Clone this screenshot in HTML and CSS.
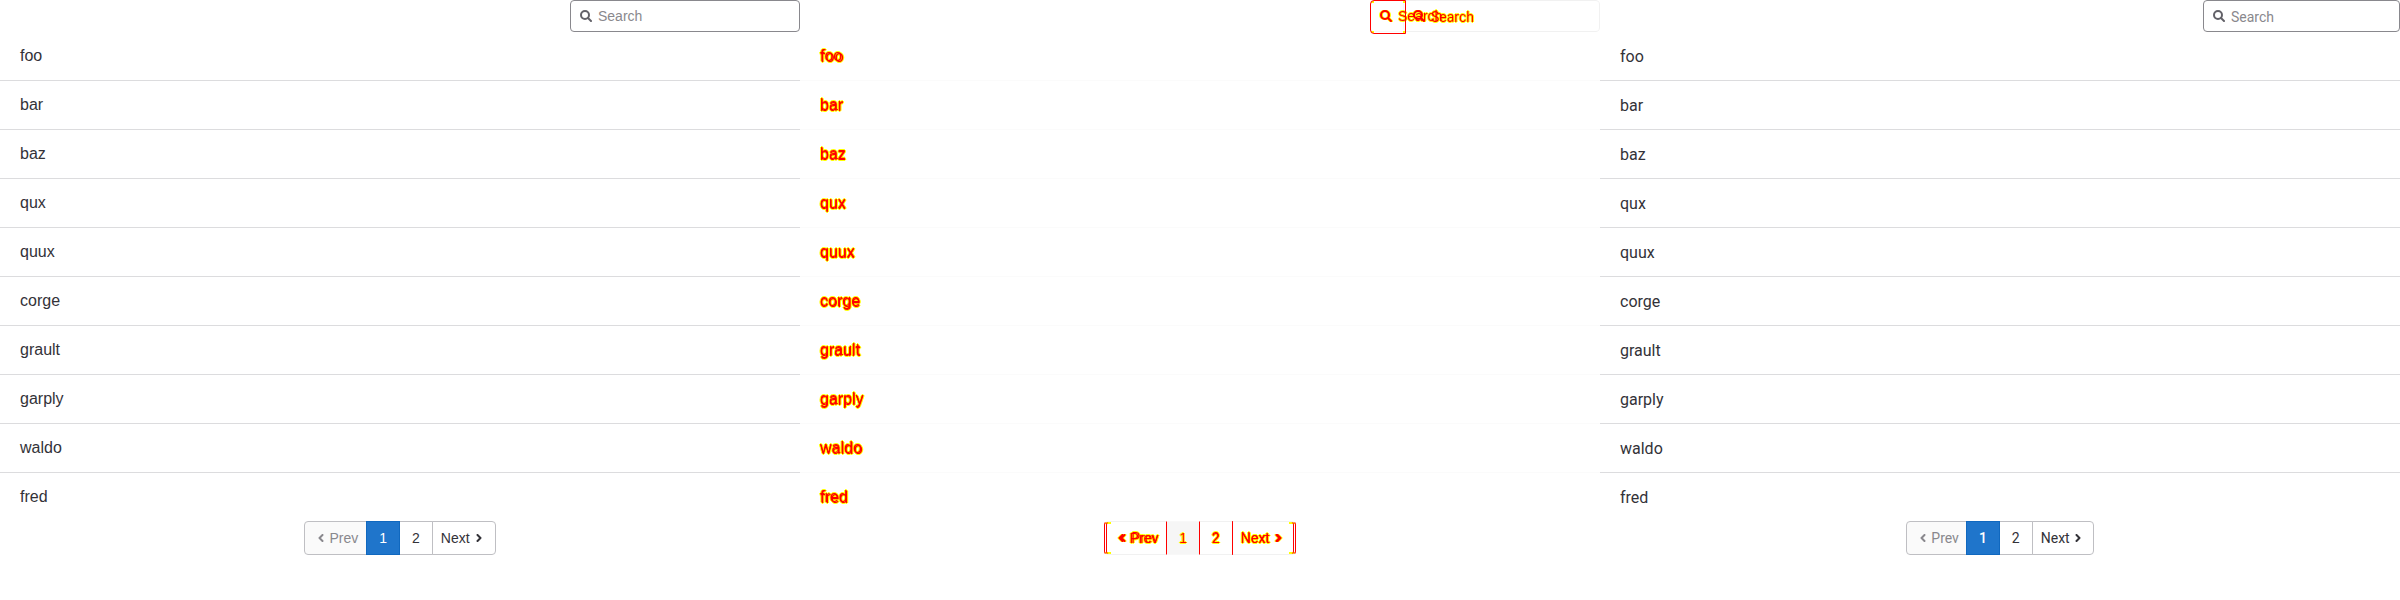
FILE: index.html
```
<!DOCTYPE html>
<html lang="en">
<head>
<meta charset="utf-8">
<title>List comparison</title>
<link rel="stylesheet" href="styles.css">
</head>
<body>
<svg class="sprite" aria-hidden="true">
  <symbol id="search" viewBox="0 0 12 12"><circle cx="5" cy="5" r="4" fill="none" stroke="currentColor" stroke-width="2"/><path d="M8 8l3 3" fill="none" stroke="currentColor" stroke-width="2" stroke-linecap="round"/></symbol>
  <symbol id="left" viewBox="0 0 8 8"><path d="M5.500 1L2.500 4l3 3" fill="none" stroke="currentColor" stroke-width="2" stroke-linecap="round" stroke-linejoin="round"/></symbol>
  <symbol id="right" viewBox="0 0 8 8"><path d="M2.500 1l3 3-3 3" fill="none" stroke="currentColor" stroke-width="2" stroke-linecap="round" stroke-linejoin="round"/></symbol>
</svg>
<main class="compare" id="compare">
  <section class="view before"></section>
  <div class="stack">
    <section class="view before diff"></section>
    <section class="view after diff"></section>
  </div>
  <section class="view after"></section>
</main>
<template id="view">
  <div class="toolbar">
    <label class="search"><svg class="icon-search"><use href="#search"/></svg><input type="search" placeholder="Search" aria-label="Search"></label>
  </div>
  <ul class="list">
    <li>foo</li>
    <li>bar</li>
    <li>baz</li>
    <li>qux</li>
    <li>quux</li>
    <li>corge</li>
    <li>grault</li>
    <li>garply</li>
    <li>waldo</li>
    <li>fred</li>
  </ul>
  <nav class="pages" aria-label="Pagination">
    <button class="page prev" disabled><svg class="icon-chevron"><use href="#left"/></svg>Prev</button>
    <button class="page current" aria-current="page">1</button>
    <button class="page">2</button>
    <button class="page next">Next<svg class="icon-chevron"><use href="#right"/></svg></button>
  </nav>
</template>
<script src="views.js"></script>
</body>
</html>
```
FILE: views.js
```
const template = document.getElementById('view');
document.querySelectorAll('.view').forEach((view) => {
  view.append(template.content.cloneNode(true));
});
```
FILE: styles.css
```
* { box-sizing: border-box; }
body { margin: 0; background: #fff; color: #333238; }
.sprite { position: absolute; width: 0; height: 0; }
.compare { display: grid; grid-template-columns: repeat(3, minmax(0, 1fr)); }
.stack { display: grid; isolation: isolate; }
.stack .view { grid-area: 1 / 1; }
.before { font-family: "Liberation Sans", Arial, sans-serif; }
.after { font-family: Roboto, "Noto Sans", sans-serif; }

.toolbar { display: flex; justify-content: flex-end; }
.search { position: relative; display: flex; align-items: center; gap: 6px; width: 230px; height: 32px; padding: 0 9px; border: 1px solid #89888d; border-radius: 4px; color: #626168; }
.after .search { width: 197px; }
.search input { flex: 1; min-width: 0; padding: 0; border: 0; outline: 0; background: none; font: inherit; font-size: 14px; line-height: 16px; text-shadow: inherit; }
.after .search input { padding-top: 2px; }
.search input::placeholder { color: #89888d; opacity: 1; }
.icon-search { width: 12px; height: 12px; flex: none; }

.list { margin: 0; padding: 0; list-style: none; font-size: 16px; line-height: 24px; }
.list li { padding: 12px 20px; border-bottom: 1px solid #dcdcde; }
.list li:last-child { border-bottom: 0; }
.after .list li { padding: 13px 20px 11px; }

.pages { display: flex; justify-content: center; }
.page { display: flex; align-items: center; gap: 4px; height: 34px; margin: 0 0 0 -1px; padding: 0 12px; border: 1px solid #bfbfc3; background: #fff; color: #333238; font: inherit; font-size: 14px; line-height: 16px; }
.prev { margin-left: 0; padding-right: 8px; border-radius: 4px 0 0 4px; background: #fafafa; color: #89888d; }
.next { gap: 5px; padding-left: 8px; border-radius: 0 4px 4px 0; }
.current { z-index: 1; border-color: #1068bf; background: #1f75cb; color: #fff; }
.after .current { font-weight: 500; }
.after .page { padding-right: 12px; padding-left: 12px; }
.after .prev { padding-right: 7px; }
.after .next { gap: 4px; padding-left: 8px; padding-right: 11px; }
.icon-chevron { width: 8px; height: 8px; overflow: visible; }

.diff { color: #f00; text-shadow: 1px 0 #ff0, -1px 0 #ff0, 0 1px #ff0, 0 -1px #ff0; }
.diff.after { mix-blend-mode: multiply; }
.diff .search { border-color: #f8f8f8; color: #f00; }
.diff .search input::placeholder { color: #f00; text-shadow: inherit; }
.diff.before .search::before { content: ""; position: absolute; top: -1px; left: -1px; width: 34px; height: 32px; border: 1px solid #f00; background: linear-gradient(#ff0, #ff0) 0 0 / 3px 2px, linear-gradient(#ff0, #ff0) 0 100% / 3px 2px, linear-gradient(#ff0, #ff0) 100% 0 / 2px 2px, linear-gradient(#ff0, #ff0) 100% 100% / 2px 2px; background-repeat: no-repeat; border-radius: 4px 0 0 4px; }
.diff .list li { border-color: #fdfdfd; }
.diff .page { border-color: #f8f8f8 #f00; background: none; color: #f00; text-shadow: inherit; }
.diff .current { background: #f6f6f6; }
.diff .prev { background: linear-gradient(#ff0, #ff0) 0 0 / 4px 2px no-repeat, linear-gradient(#ff0, #ff0) 0 100% / 4px 2px no-repeat; }
.diff .next { background: linear-gradient(#ff0, #ff0) 100% 0 / 4px 2px no-repeat, linear-gradient(#ff0, #ff0) 100% 100% / 4px 2px no-repeat; }
.diff svg { filter: drop-shadow(1px 0 #ff0) drop-shadow(-1px 0 #ff0); }
```
